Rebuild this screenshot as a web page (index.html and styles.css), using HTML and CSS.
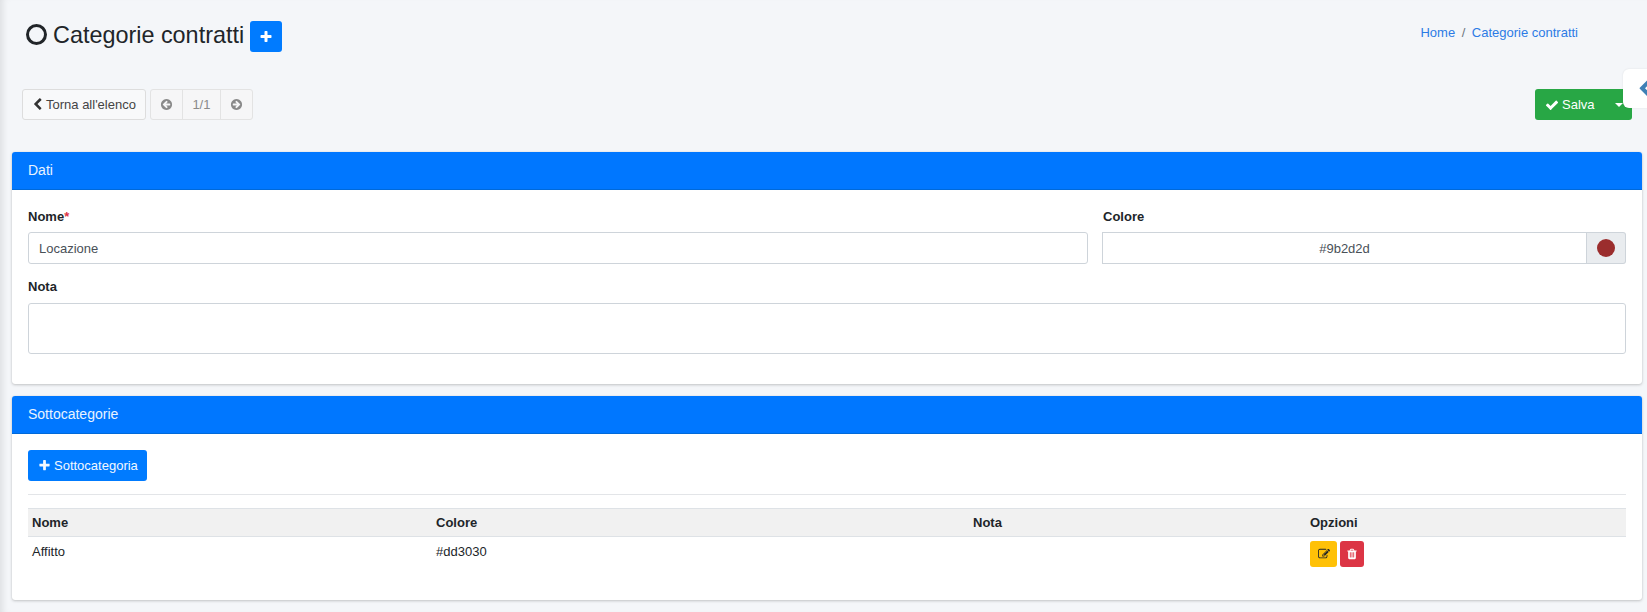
FILE: index.html
```html
<!DOCTYPE html>
<html lang="it">
<head>
<meta charset="utf-8">
<title>Categorie contratti</title>
<link rel="stylesheet" href="styles.css">
</head>
<body>
<svg class="defs" width="0" height="0" aria-hidden="true">
<symbol id="i-plus" viewBox="0 0 1792 1792"><path d="M1600 736v192q0 40-28 68t-68 28h-416v416q0 40-28 68t-68 28h-192q-40 0-68-28t-28-68v-416h-416q-40 0-68-28t-28-68v-192q0-40 28-68t68-28h416v-416q0-40 28-68t68-28h192q40 0 68 28t28 68v416h416q40 0 68 28t28 68z"/></symbol>
<symbol id="i-check" viewBox="0 0 1792 1792"><path d="M1671 566q0 40-28 68l-724 724-136 136q-28 28-68 28t-68-28l-136-136-362-362q-28-28-28-68t28-68l136-136q28-28 68-28t68 28l294 295 656-657q28-28 68-28t68 28l136 136q28 28 28 68z"/></symbol>
<symbol id="i-chev" viewBox="0 0 1792 1792"><path d="M1427 301l-531 531 531 531q19 19 19 45t-19 45l-166 166q-19 19-45 19t-45-19l-742-742q-19-19-19-45t19-45l742-742q19-19 45-19t45 19l166 166q19 19 19 45t-19 45z"/></symbol>
<symbol id="i-left" viewBox="0 0 1792 1792"><path d="M1408 960v-128q0-26-19-45t-45-19h-502l189-189q19-19 19-45t-19-45l-91-91q-18-18-45-18t-45 18l-362 362-91 91q-18 18-18 45t18 45l91 91 362 362q18 18 45 18t45-18l91-91q18-18 18-45t-18-45l-189-189h502q26 0 45-19t19-45zm256-64q0 209-103 385.5t-279.5 279.5-385.5 103-385.5-103-279.5-279.5-103-385.5 103-385.5 279.5-279.5 385.5-103 385.5 103 279.5 279.5 103 385.5z"/></symbol>
<symbol id="i-right" viewBox="0 0 1792 1792"><path d="M1413 896q0-27-18-45l-91-91-362-362q-18-18-45-18t-45 18l-91 91q-18 18-18 45t18 45l189 189h-502q-26 0-45 19t-19 45v128q0 26 19 45t45 19h502l-189 189q-19 19-19 45t19 45l91 91q18 18 45 18t45-18l362-362 91-91q18-18 18-45zm251 0q0 209-103 385.5t-279.5 279.5-385.5 103-385.5-103-279.5-279.5-103-385.5 103-385.5 279.5-279.5 385.5-103 385.5 103 279.5 279.5 103 385.5z"/></symbol>
<symbol id="i-edit" viewBox="0 0 1792 1792"><path d="M888 1184l116-116-152-152-116 116v56h96v96h56zm440-720q-16-16-33 1l-350 350q-17 17-1 33t33-1l350-350q17-17 1-33zm80 594v190q0 119-84.5 203.5t-203.5 84.5h-832q-119 0-203.5-84.5t-84.5-203.5v-832q0-119 84.5-203.5t203.5-84.5h832q63 0 117 25 15 7 18 23 3 17-9 29l-49 49q-14 14-32 8-23-6-45-6h-832q-66 0-113 47t-47 113v832q0 66 47 113t113 47h832q66 0 113-47t47-113v-126q0-13 9-22l64-64q15-15 35-7t20 29zm-96-738l288 288-672 672h-288v-288zm444 132l-92 92-288-288 92-92q28-28 68-28t68 28l152 152q28 28 28 68t-28 68z"/></symbol>
<symbol id="i-trash" viewBox="0 0 1792 1792"><path d="M704 1376v-704q0-14-9-23t-23-9h-64q-14 0-23 9t-9 23v704q0 14 9 23t23 9h64q14 0 23-9t9-23zm256 0v-704q0-14-9-23t-23-9h-64q-14 0-23 9t-9 23v704q0 14 9 23t23 9h64q14 0 23-9t9-23zm256 0v-704q0-14-9-23t-23-9h-64q-14 0-23 9t-9 23v704q0 14 9 23t23 9h64q14 0 23-9t9-23zm-544-992h448l-48-117q-7-9-17-11h-317q-10 2-17 11zm928 32v64q0 14-9 23t-23 9h-96v948q0 83-47 143.5t-113 60.5h-832q-66 0-113-57.5t-47-139.5v-955h-96q-14 0-23-9t-9-23v-64q0-14 9-23t23-9h309l70-167q15-37 54-63t79-26h320q40 0 79 26t54 63l70 167h309q14 0 23 9t9 23z"/></symbol>
</svg>

<div class="wrapper">
  <header class="page-head">
    <div class="title-wrap">
      <span class="ring"></span>
      <h1 class="title">Categorie contratti</h1>
      <a class="btn-add"><svg class="ico ico-14"><use href="#i-plus"/></svg></a>
    </div>
    <nav class="crumbs"><a>Home</a><span class="sep">/</span><a>Categorie contratti</a></nav>
  </header>

  <div class="toolbar">
    <div class="tools-left">
      <a class="btn btn-light"><svg class="ico ico-13"><use href="#i-chev"/></svg> Torna all'elenco</a>
      <div class="pager">
        <a class="pg pg-icon"><svg class="ico ico-13"><use href="#i-left"/></svg></a>
        <span class="pg pg-num">1/1</span>
        <a class="pg pg-icon"><svg class="ico ico-13"><use href="#i-right"/></svg></a>
      </div>
    </div>
    <div class="save">
      <a class="save-main"><svg class="ico ico-14"><use href="#i-check"/></svg> Salva</a>
      <a class="save-caret"><span class="caret"></span></a>
    </div>
  </div>

  <section class="card card-form">
    <h2 class="card-head">Dati</h2>
    <div class="card-body card-body-form">
      <div class="row">
        <div class="field field-name">
          <label class="lbl">Nome<span class="req">*</span></label>
          <div class="input">Locazione</div>
        </div>
        <div class="field field-color">
          <label class="lbl lbl-color">Colore</label>
          <div class="color-group">
            <div class="input input-color">#9b2d2d</div>
            <span class="addon"><span class="swatch"></span></span>
          </div>
        </div>
      </div>
      <div class="field field-note">
        <label class="lbl lbl-note">Nota</label>
        <div class="textarea"></div>
      </div>
    </div>
  </section>

  <section class="card">
    <h2 class="card-head">Sottocategorie</h2>
    <div class="card-body card-body-list">
      <a class="btn-primary"><svg class="ico ico-13"><use href="#i-plus"/></svg> Sottocategoria</a>
      <hr class="rule">
      <table class="tbl">
        <thead>
          <tr><th class="c1">Nome</th><th class="c2">Colore</th><th class="c3">Nota</th><th class="c4">Opzioni</th></tr>
        </thead>
        <tbody>
          <tr>
            <td>Affitto</td><td>#dd3030</td><td></td>
            <td class="opts">
              <a class="mini mini-edit"><svg class="ico ico-12"><use href="#i-edit"/></svg></a>
              <a class="mini mini-del"><svg class="ico ico-12"><use href="#i-trash"/></svg></a>
            </td>
          </tr>
        </tbody>
      </table>
    </div>
  </section>
</div>

<a class="side-tab"><svg class="ico side-ico"><use href="#i-chev"/></svg></a>
</body>
</html>
```

FILE: styles.css
```css
* { box-sizing: border-box; }
html, body { height: 100%; }
body {
  margin: 0;
  background: #f4f6f9;
  color: #212529;
  font-family: "Liberation Sans", Arial, sans-serif;
  font-size: 13px;
  line-height: 1.5;
  overflow: hidden;
  box-shadow: inset 7px 0 6px -4px rgba(0, 0, 0, .09);
}
.defs { position: absolute; }
.ico { fill: currentColor; display: inline-block; vertical-align: -2px; }
.ico-12 { width: 12px; height: 12px; }
.ico-13 { width: 13px; height: 13px; }
.ico-14 { width: 14px; height: 14px; }

.wrapper { padding: 0 5px 0 12px; }

.page-head {
  display: flex;
  justify-content: space-between;
  height: 89px;
  padding: 21px 64px 0 13px;
}
.title-wrap { display: flex; align-items: flex-start; }
.ring {
  width: 21px;
  height: 21px;
  margin: 3px 6px 0 1px;
  border: 3.5px solid #212529;
  border-radius: 50%;
}
.title { margin: 0; font-size: 23.4px; font-weight: 400; line-height: 29px; }
.btn-add {
  display: flex;
  align-items: center;
  justify-content: center;
  width: 32px;
  height: 31px;
  margin-left: 6px;
  background: #007bff;
  color: #fff;
  border-radius: 3px;
}
.crumbs { color: #6c757d; padding-top: 2px; line-height: 20px; }
.crumbs a { color: #2c7be5; }
.crumbs .sep { padding: 0 6.5px; }

.toolbar {
  display: flex;
  justify-content: space-between;
  height: 63px;
  padding: 0 10px;
}
.tools-left { display: flex; gap: 4px; align-items: flex-start; }
.btn {
  display: inline-flex;
  align-items: center;
  gap: 3px;
  height: 31px;
  padding: 0 9px;
  border: 1px solid #ddd;
  border-radius: 3px;
  background: #f8f9fa;
  color: #444;
}
.btn .ico { color: #333; margin-left: -1px; margin-right: -1px; }
.pager {
  display: flex;
  height: 31px;
  border: 1px solid #e3e3e3;
  border-radius: 3px;
  background: #f6f6f7;
  color: #8a8a8a;
}
.pg { display: flex; align-items: center; justify-content: center; }
.pg-icon { width: 31px; }
.pg-num { width: 39px; border-left: 1px solid #e3e3e3; border-right: 1px solid #e3e3e3; }

.save {
  display: flex;
  height: 31px;
  background: #28a745;
  border-radius: 3px;
  color: #fff;
}
.save-main { display: flex; align-items: center; gap: 3px; padding-left: 10px; width: 71px; }
.save-caret { width: 26px; display: flex; align-items: center; justify-content: center; }
.caret { border-top: 4px solid #fff; border-left: 4px solid transparent; border-right: 4px solid transparent; }

.card {
  background: #fff;
  border-radius: 3px;
  box-shadow: 0 0 1px rgba(0, 0, 0, .13), 0 1px 3px rgba(0, 0, 0, .2);
  margin-bottom: 13px;
  overflow: hidden;
}
.card-form { margin-bottom: 12px; }
.card-head {
  margin: 0;
  height: 38px;
  padding: 0 16px;
  background: #0077ff;
  border-bottom: 1px solid #0069d9;
  color: #e8f3ff;
  font-size: 14px;
  font-weight: 400;
  line-height: 36px;
}
.card-body-form { padding: 17px 16px 0; height: 194px; }
.card-body-list { padding: 16px 16px 0; height: 166px; }

.row { display: flex; gap: 14px; }
.field-name { width: 1060px; }
.field-color { width: 524px; }
.lbl { display: block; font-weight: 700; height: 25px; line-height: 20px; }
.lbl-color { padding-left: 1px; }
.req { color: #dc3545; }
.input {
  height: 32px;
  padding: 0 10px;
  border: 1px solid #ced4da;
  border-radius: 3px;
  background: #fff;
  color: #495057;
  line-height: 31px;
}
.color-group { display: flex; }
.input-color { flex: 1; text-align: center; border-radius: 0; }
.addon {
  display: flex;
  align-items: center;
  justify-content: center;
  width: 39px;
  height: 32px;
  background: #e9ecef;
  border: 1px solid #ced4da;
  border-left: 0;
  border-radius: 0 3px 3px 0;
}
.swatch { width: 18px; height: 18px; border-radius: 50%; background: #9b2d2d; }
.field-note { margin-top: 13px; }
.lbl-note { height: 26px; }
.textarea {
  height: 51px;
  border: 1px solid #ced4da;
  border-radius: 3px;
  background: #fff;
}

.btn-primary {
  display: inline-flex;
  align-items: center;
  gap: 3px;
  height: 31px;
  padding: 0 9px 0 10px;
  background: #007bff;
  border-radius: 3px;
  color: #f2f8ff;
}
.rule { margin: 13px 0; border: 0; border-top: 1px solid #e3e5e8; }
.tbl { width: 100%; border-collapse: collapse; table-layout: fixed; }
.tbl th {
  height: 28px;
  padding: 0 4px;
  background: #f1f1f1;
  border-top: 1px solid #dee2e6;
  border-bottom: 1px solid #dee2e6;
  text-align: left;
  font-weight: 700;
}
.tbl td { padding: 5px 4px; height: 36px; vertical-align: top; line-height: 20px; color: #212529; }
.tbl td.opts { display: flex; gap: 3px; padding-top: 4px; }
.c1 { width: 404px; }
.c2 { width: 537px; }
.c3 { width: 337px; }
.mini {
  display: flex;
  align-items: center;
  justify-content: center;
  height: 26px;
  border-radius: 3px;
}
.mini-edit { width: 27px; background: #ffc107; color: #212529; }
.mini-del { width: 24px; background: #dc3545; color: #fff; }

.side-tab {
  position: absolute;
  top: 69px;
  right: 0;
  width: 24px;
  height: 39px;
  display: flex;
  align-items: center;
  padding-left: 12px;
  background: #fff;
  border-radius: 6px 0 0 6px;
  box-shadow: 0 0 2px rgba(0, 0, 0, .1);
  overflow: hidden;
}
.side-ico { flex: none; width: 20px; height: 20px; color: #3f80b5; }
```
